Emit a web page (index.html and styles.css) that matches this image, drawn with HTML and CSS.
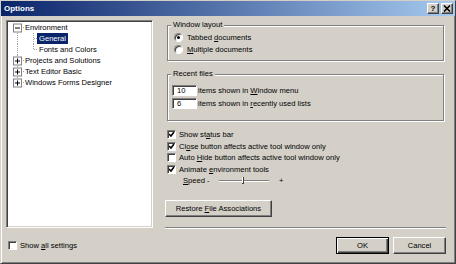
FILE: index.html
```html
<!DOCTYPE html>
<html lang="en">
<head>
    <meta charset="UTF-8">
    <title>Options</title>
    <link rel="stylesheet" href="styles.css">
</head>
<body>
<div class="dialog">
    <div class="titlebar">
        <span class="title">Options</span>
        <div class="caption-buttons">
            <span class="cap-btn help">?</span>
            <span class="cap-btn">
                <svg width="8" height="7" viewBox="0 0 8 7"><path d="M1 0.5 L7 6.5 M7 0.5 L1 6.5" stroke="#000" stroke-width="1.6"/></svg>
            </span>
        </div>
    </div>

    <div class="content">
        <div class="tree">
            <div class="node">
                <svg class="lines" width="16" height="11" viewBox="0 0 16 11">
                    <path d="M8.5 9 V11" stroke="#a0a0a0" stroke-dasharray="1 1"/>
                    <path d="M12 5.5 H16" stroke="#a0a0a0" stroke-dasharray="1 1"/>
                    <rect x="4.5" y="2" width="8" height="8" fill="#fff" stroke="#808080"/>
                    <path d="M6 6 H11" stroke="#000"/>
                </svg>
                <span class="label">Environment</span>
            </div>
            <div class="node">
                <svg class="lines" width="28" height="11" viewBox="0 0 28 11">
                    <path d="M8.5 0 V11 M24.5 0 V11 M25 5.5 H28" stroke="#a0a0a0" stroke-dasharray="1 1"/>
                </svg>
                <span class="label selected">General</span>
            </div>
            <div class="node">
                <svg class="lines" width="28" height="11" viewBox="0 0 28 11">
                    <path d="M8.5 0 V11 M24.5 0 V6 M25 5.5 H28" stroke="#a0a0a0" stroke-dasharray="1 1"/>
                </svg>
                <span class="label">Fonts and Colors</span>
            </div>
            <div class="node">
                <svg class="lines" width="16" height="11" viewBox="0 0 16 11">
                    <path d="M8.5 0 V2 M8.5 9 V11 M12 5.5 H16" stroke="#a0a0a0" stroke-dasharray="1 1"/>
                    <rect x="4.5" y="2" width="8" height="8" fill="#fff" stroke="#808080"/>
                    <path d="M6 6 H11 M8.5 3.5 V8.5" stroke="#000"/>
                </svg>
                <span class="label">Projects and Solutions</span>
            </div>
            <div class="node">
                <svg class="lines" width="16" height="11" viewBox="0 0 16 11">
                    <path d="M8.5 0 V2 M8.5 9 V11 M12 5.5 H16" stroke="#a0a0a0" stroke-dasharray="1 1"/>
                    <rect x="4.5" y="2" width="8" height="8" fill="#fff" stroke="#808080"/>
                    <path d="M6 6 H11 M8.5 3.5 V8.5" stroke="#000"/>
                </svg>
                <span class="label">Text Editor Basic</span>
            </div>
            <div class="node">
                <svg class="lines" width="16" height="11" viewBox="0 0 16 11">
                    <path d="M8.5 0 V2 M12 5.5 H16" stroke="#a0a0a0" stroke-dasharray="1 1"/>
                    <rect x="4.5" y="2" width="8" height="8" fill="#fff" stroke="#808080"/>
                    <path d="M6 6 H11 M8.5 3.5 V8.5" stroke="#000"/>
                </svg>
                <span class="label">Windows Forms Designer</span>
            </div>
        </div>

        <div class="pane">
            <div class="group layout">
                <span class="group-title">Window layout</span>
                <div class="option"><span class="radio on"></span><span>Tabbed <u>d</u>ocuments</span></div>
                <div class="option"><span class="radio"></span><span><u>M</u>ultiple documents</span></div>
            </div>

            <div class="group recent">
                <span class="group-title">Recent files</span>
                <div class="num-row"><span class="num">10</span><span>items shown in <u>W</u>indow menu</span></div>
                <div class="num-row"><span class="num">6</span><span>items shown in <u>r</u>ecently used lists</span></div>
            </div>

            <div class="checks">
                <div class="option"><span class="check on"></span><span>Show st<u>a</u>tus bar</span></div>
                <div class="option"><span class="check on"></span><span>Cl<u>o</u>se button affects active tool window only</span></div>
                <div class="option"><span class="check"></span><span>Auto <u>H</u>ide button affects active tool window only</span></div>
                <div class="option"><span class="check on"></span><span>Animate <u>e</u>nvironment tools</span></div>
                <div class="speed">
                    <span class="speed-label"><u>S</u>peed -</span>
                    <svg class="slider" width="52" height="9" viewBox="0 0 52 9">
                        <path d="M1 4.5 H51" stroke="#808080"/>
                        <path d="M1 5.5 H51" stroke="#fff"/>
                        <path d="M25.5 1 V7 M24 7.5 H26" stroke="#404040"/>
                        <path d="M24.5 1 V7" stroke="#fff"/>
                    </svg>
                    <span class="plus">+</span>
                </div>
            </div>

            <button class="btn restore">Restore <u>F</u>ile Associations</button>

            <div class="separator"></div>
        </div>
    </div>

    <div class="footer">
        <div class="option"><span class="check"></span><span>Show <u>a</u>ll settings</span></div>
        <div class="actions">
            <button class="btn default">OK</button>
            <button class="btn">Cancel</button>
        </div>
    </div>
</div>
</body>
</html>
```

FILE: styles.css
```css
body {
    margin: 0;
    font-family: "Liberation Sans", Arial, sans-serif;
    font-size: 7.6px;
    color: #000;
}
.dialog {
    width: 456px;
    height: 264px;
    box-sizing: border-box;
    background-color: #d4d0c8;
    border: 1px solid;
    border-color: #d4d0c8 #404040 #404040 #d4d0c8;
    box-shadow: inset 1px 1px 0 #fff, inset -1px -1px 0 #808080;
    display: flex;
    flex-direction: column;
}
.titlebar {
    height: 15px;
    background: linear-gradient(to right, #0a246a, #a6caf0);
    display: flex;
    align-items: center;
    justify-content: space-between;
    padding: 0 2px 0 3px;
}
.title {
    color: #fff;
    font-weight: bold;
    font-size: 8px;
}
.caption-buttons {
    display: flex;
    gap: 2px;
}
.cap-btn {
    width: 12px;
    height: 11px;
    box-sizing: border-box;
    background-color: #d4d0c8;
    border: 1px solid;
    border-color: #fff #404040 #404040 #fff;
    box-shadow: inset -1px -1px 0 #808080;
    display: flex;
    align-items: center;
    justify-content: center;
    font-weight: bold;
    font-size: 8px;
    line-height: 1;
}
.content {
    height: 213px;
    display: grid;
    grid-template-columns: 147px 1fr;
    gap: 12px;
    padding: 0 9px 0 5px;
}

/* tree */
.tree {
    margin-top: 4px;
    height: 208px;
    box-sizing: border-box;
    background-color: #fff;
    border: 1px solid;
    border-color: #808080 #fff #fff #808080;
    box-shadow: inset 1px 1px 0 #404040, inset -1px -1px 0 #d4d0c8;
    padding: 1px 2px;
}
.node {
    display: flex;
    align-items: center;
    height: 11px;
}
.lines {
    flex: none;
    display: block;
}
.label {
    padding: 0 2px;
    line-height: 11px;
    white-space: nowrap;
}
.node > svg[width="16"] + .label {
    margin-left: -2px;
}
.label.selected {
    background-color: #0a246a;
    color: #fff;
}

/* right pane */
.pane {
    display: flex;
    flex-direction: column;
    padding-top: 4px;
}
.group {
    position: relative;
    margin: 0 2px;
    border: 1px solid #808080;
    box-shadow: 1px 1px 0 #fff, inset 1px 1px 0 #fff;
}
.group-title {
    position: absolute;
    top: -6px;
    left: 3px;
    padding: 0 2px;
    line-height: 9px;
    background-color: #d4d0c8;
}
.group.layout {
    margin-top: 5px;
    height: 36px;
    box-sizing: border-box;
    padding: 5px 6px 0;
}
.group.recent {
    margin-top: 13px;
    height: 47px;
    box-sizing: border-box;
    padding: 10px 4px 0;
}
.option {
    display: flex;
    align-items: center;
    height: 12px;
    white-space: nowrap;
}
.radio {
    width: 9px;
    height: 9px;
    box-sizing: border-box;
    border-radius: 50%;
    background-color: #fff;
    border: 1px solid;
    border-color: #808080 #fff #fff #808080;
    box-shadow: inset 1px 1px 0 #404040;
    margin-right: 4px;
    display: flex;
    align-items: center;
    justify-content: center;
}
.radio.on::after {
    content: "";
    width: 3px;
    height: 3px;
    border-radius: 50%;
    background-color: #000;
}
.num-row {
    display: flex;
    align-items: center;
    height: 11px;
    margin-bottom: 2px;
    white-space: nowrap;
}
.num {
    width: 25px;
    height: 11px;
    box-sizing: border-box;
    background-color: #fff;
    border: 1px solid;
    border-color: #808080 #fff #fff #808080;
    box-shadow: inset 1px 1px 0 #404040;
    padding-left: 4px;
    line-height: 9px;
    margin-right: 1px;
}
.checks {
    margin-top: 8px;
    padding-left: 2px;
}
.checks .option {
    height: 11.5px;
}
.check {
    width: 9px;
    height: 9px;
    box-sizing: border-box;
    background-color: #fff;
    border: 1px solid;
    border-color: #808080 #fff #fff #808080;
    box-shadow: inset 1px 1px 0 #404040;
    margin-right: 3px;
    flex: none;
}
.check.on {
    background-image: url("data:image/svg+xml;utf8,<svg xmlns='http://www.w3.org/2000/svg' width='7' height='7'><path d='M1 3 L3 5 L6 1' fill='none' stroke='black' stroke-width='1.5'/></svg>");
    background-repeat: no-repeat;
    background-position: 0 0;
}
.speed {
    display: flex;
    align-items: center;
    height: 11.5px;
    padding-left: 16px;
}
.speed-label {
    width: 35px;
}
.slider {
    display: block;
}
.plus {
    margin-left: 9px;
}
.btn {
    font-family: inherit;
    font-size: inherit;
    color: #000;
    background-color: #d4d0c8;
    border: 1px solid;
    border-color: #fff #404040 #404040 #fff;
    box-shadow: inset -1px -1px 0 #808080;
    padding: 0;
    height: 17px;
    line-height: 15px;
}
.restore {
    margin-top: 13.5px;
    width: 107px;
}
.separator {
    margin-top: 10px;
    height: 2px;
    border-top: 1px solid #808080;
    border-bottom: 1px solid #fff;
    box-sizing: border-box;
}

/* footer */
.footer {
    flex: 1;
    display: flex;
    align-items: center;
    justify-content: space-between;
    padding: 0 9px 2px 7px;
}
.actions {
    display: flex;
    gap: 4px;
}
.actions .btn {
    width: 53px;
}
.btn.default {
    border: 1px solid #000;
    box-shadow: inset 1px 1px 0 #fff, inset -1px -1px 0 #404040, inset -2px -2px 0 #808080;
}
```
